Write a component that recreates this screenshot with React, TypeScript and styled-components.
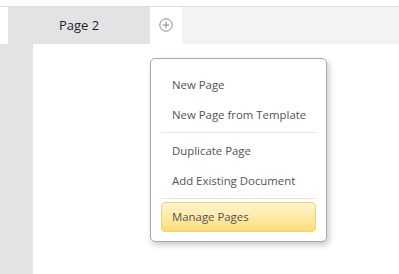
import React from 'react';
import styled, { createGlobalStyle } from 'styled-components';

const GlobalStyle = createGlobalStyle`
  html, body {
    margin: 0;
    padding: 0;
    background: #ffffff;
  }
  body {
    font-family: 'Open Sans', 'Noto Sans', sans-serif;
  }
`;

type MenuEntry = { label: string; active?: boolean } | 'sep';

const ENTRIES: MenuEntry[] = [
  { label: 'New Page' },
  { label: 'New Page from Template' },
  'sep',
  { label: 'Duplicate Page' },
  { label: 'Add Existing Document' },
  'sep',
  { label: 'Manage Pages', active: true },
];

const PlusIcon = () => (
  <svg width="14" height="14" viewBox="0 0 14 14" fill="none">
    <circle cx="7" cy="7" r="6.2" stroke="#8a8a8a" strokeWidth="1" />
    <path d="M7 3.6v6.8M3.6 7h6.8" stroke="#8a8a8a" strokeWidth="1" />
  </svg>
);

export default function App() {
  return (
    <Page>
      <GlobalStyle />
      <TopStrip />
      <TabBar>
        <LeftCap />
        <Tab>Page 2</Tab>
        <AddTab>
          <PlusIcon />
        </AddTab>
        <TabFill />
      </TabBar>
      <Body>
        <Rail />
        <Canvas>
          <Menu>
            {ENTRIES.map((e, i) =>
              e === 'sep' ? (
                <Separator key={i} />
              ) : (
                <Item key={i} active={!!e.active}>
                  {e.label}
                </Item>
              )
            )}
          </Menu>
        </Canvas>
      </Body>
    </Page>
  );
}

const Page = styled.div`
  width: 399px;
  height: 274px;
  display: flex;
  flex-direction: column;
  background: #ffffff;
  overflow: hidden;
`;

const TopStrip = styled.div`
  height: 6px;
  background: #ffffff;
`;

const TabBar = styled.div`
  display: flex;
  height: 37px;
  border-top: 1px solid #dedede;
  background: #f3f3f5;
`;

const LeftCap = styled.div`
  width: 8px;
  background: #ffffff;
`;

const Tab = styled.div`
  width: 142px;
  display: flex;
  align-items: center;
  justify-content: center;
  background: #e3e3e5;
  color: #1e1e1e;
  font-size: 13px;
  padding-bottom: 1px;
`;

const AddTab = styled.div`
  width: 32px;
  display: flex;
  align-items: center;
  justify-content: center;
  background: #ffffff;
  padding-bottom: 1px;
`;

const TabFill = styled.div`
  flex: 1;
`;

const Body = styled.div`
  flex: 1;
  display: flex;
`;

const Rail = styled.div`
  width: 33px;
  background: #e3e3e5;
`;

const Canvas = styled.div`
  flex: 1;
  position: relative;
  background: #ffffff;
`;

const Menu = styled.div`
  position: absolute;
  left: 117px;
  top: 14px;
  width: 155px;
  padding: 11px 10px 9px;
  background: #ffffff;
  border: 1px solid #a9a9a9;
  border-radius: 5px;
  box-shadow: 2px 3px 6px rgba(0, 0, 0, 0.22);
  display: flex;
  flex-direction: column;
`;

const Item = styled.div<{ active: boolean }>`
  height: 30px;
  box-sizing: border-box;
  display: flex;
  align-items: center;
  padding: 0 0 2px 10px;
  font-size: 11.4px;
  color: #535353;
  border-radius: 4px;
  border: 1px solid ${p => (p.active ? '#f3d272' : 'transparent')};
  background: ${p =>
    p.active ? 'linear-gradient(to bottom, #fff4cf 0%, #ffeaa6 50%, #fddc78 100%)' : 'transparent'};
`;

const Separator = styled.div`
  height: 1px;
  margin: 2px 0 3px;
  background: #e6e6e6;
`;
